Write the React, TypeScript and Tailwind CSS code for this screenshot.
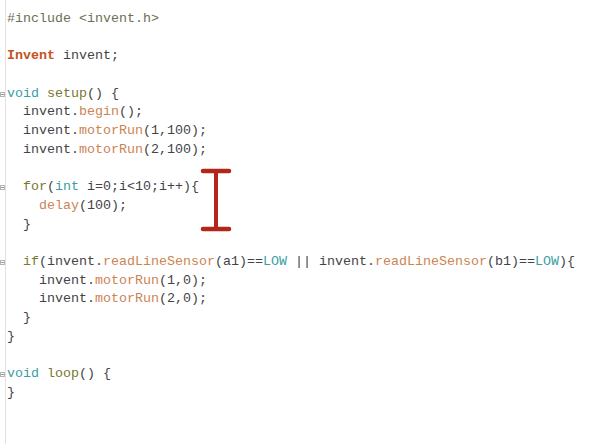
import React from 'react'

type Tok = [string, string?]

const C = {
    txt: 'text-[#3f4446]',
    pre: 'text-[#6e7052]',
    cls: 'text-[#c4541c] font-bold',
    kw: 'text-[#3a9ea3]',
    fn: 'text-[#77772f]',
    lib: 'text-[#cc8452]',
}

// each line = list of tokens, fold = has collapse marker
const lines: { toks: Tok[]; fold?: boolean }[] = [
    { toks: [['#include <invent.h>', C.pre]] },
    { toks: [] },
    { toks: [['Invent', C.cls], [' invent;']] },
    { toks: [] },
    { toks: [['void', C.kw], [' '], ['setup', C.fn], ['() {']], fold: true },
    { toks: [['  invent.'], ['begin', C.lib], ['();']] },
    { toks: [['  invent.'], ['motorRun', C.lib], ['(1,100);']] },
    { toks: [['  invent.'], ['motorRun', C.lib], ['(2,100);']] },
    { toks: [] },
    { toks: [['  '], ['for', C.fn], ['('], ['int', C.kw], [' i=0;i<10;i++){']], fold: true },
    { toks: [['    '], ['delay', C.lib], ['(100);']] },
    { toks: [['  }']] },
    { toks: [] },
    {
        toks: [
            ['  '], ['if', C.fn], ['(invent.'], ['readLineSensor', C.lib], ['(a1)=='], ['LOW', C.kw],
            [' || invent.'], ['readLineSensor', C.lib], ['(b1)=='], ['LOW', C.kw], ['){'],
        ],
        fold: true,
    },
    { toks: [['    invent.'], ['motorRun', C.lib], ['(1,0);']] },
    { toks: [['    invent.'], ['motorRun', C.lib], ['(2,0);']] },
    { toks: [['  }']] },
    { toks: [['}']] },
    { toks: [] },
    { toks: [['void', C.kw], [' '], ['loop', C.fn], ['() {']], fold: true },
    { toks: [['}']] },
]

const App = () => {
    return (
        <div className="relative w-[592px] h-[444px] bg-white overflow-hidden flex font-['Liberation_Mono',monospace] text-[13.33px] leading-[18.7px]">
            {/* Gutter with fold markers */}
            <div className="w-[6px] h-full border-r border-[#e2e2e2] pt-[10px]">
                {lines.map((l, i) => (
                    <div key={i} className="h-[18.7px] flex items-center">
                        {l.fold && (
                            <div className="w-[5px] h-[5px] border border-[#b5b5b5] flex items-center justify-center">
                                <div className="w-[3px] h-px bg-[#9a9a9a]"></div>
                            </div>
                        )}
                    </div>
                ))}
            </div>

            {/* Code */}
            <div className="flex-1 pt-[10px] pl-[1px]">
                {lines.map((l, i) => (
                    <pre key={i} className={`h-[18.7px] m-0 font-['Liberation_Mono',monospace] ${C.txt}`}>
                        {l.toks.map(([t, cls], j) => (
                            <span key={j} className={cls}>{t}</span>
                        ))}
                    </pre>
                ))}
            </div>

            {/* Text cursor marker */}
            <svg className="absolute left-[199px] top-[166px]" width="34" height="68" viewBox="0 0 34 68">
                <g stroke="#b3261a" strokeLinecap="round" fill="none">
                    <line x1="4" y1="5" x2="30" y2="5" strokeWidth="4.5" />
                    <line x1="4" y1="63" x2="30" y2="63" strokeWidth="4.5" />
                    <line x1="17" y1="5" x2="17" y2="63" strokeWidth="4" />
                </g>
            </svg>
        </div>
    )
}

export default App
